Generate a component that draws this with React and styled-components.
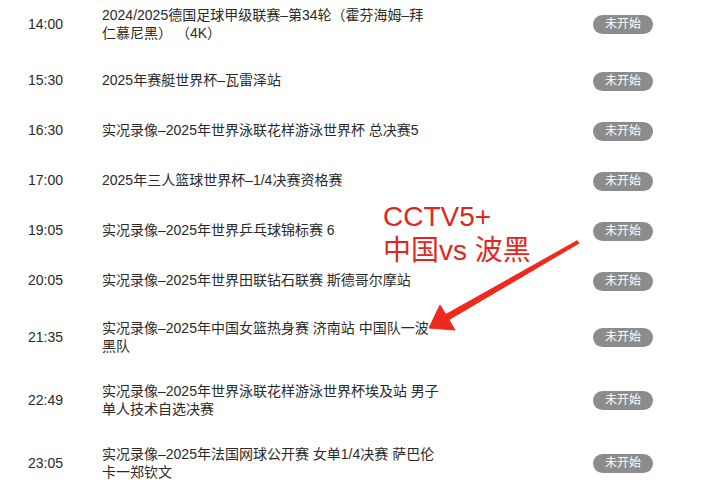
import React from "react";
import styled, { createGlobalStyle } from "styled-components";

const GlobalStyle = createGlobalStyle`
  html, body {
    margin: 0;
    padding: 0;
    background: #ffffff;
  }
  body {
    font-family: "Liberation Sans", "Noto Sans CJK SC", sans-serif;
    color: #222222;
    overflow: hidden;
  }
`;

const Styled = {
  Page: styled.div`
    position: relative;
    width: 711px;
    height: 500px;
    overflow: hidden;
    background: #ffffff;
  `,
  List: styled.div`
    display: flex;
    flex-direction: column;
    margin-top: -7px;
  `,
  Row: styled.div`
    display: flex;
    align-items: center;
    min-height: 50px;
    padding: 14px 0;
    box-sizing: border-box;
  `,
  Time: styled.div`
    width: 74px;
    padding-left: 28px;
    flex-shrink: 0;
    font-size: 14px;
    line-height: 17.5px;
    color: #2a2a2a;
  `,
  Title: styled.div`
    width: 345px;
    display: flex;
    flex-direction: column;
    font-size: 14px;
    line-height: 17.5px;
    color: #2a2a2a;
  `,
  Line: styled.span`
    white-space: pre;
  `,
  Badge: styled.div`
    margin-left: auto;
    margin-right: 58px;
    width: 60px;
    height: 19px;
    border-radius: 10px;
    background: #8c8c8c;
    color: #ffffff;
    font-size: 12px;
    line-height: 19px;
    text-align: center;
    flex-shrink: 0;
  `,
  Note: styled.div`
    position: absolute;
    left: 383px;
    top: 200px;
    font-size: 28px;
    line-height: 34px;
    color: #e3261d;
    white-space: nowrap;
  `,
  Arrow: styled.svg`
    position: absolute;
    left: 0;
    top: 0;
    pointer-events: none;
  `,
};

const programs = [
  { time: "14:00", lines: ["2024/2025德国足球甲级联赛–第34轮（霍芬海姆–拜", "仁慕尼黑） （4K）"] },
  { time: "15:30", lines: ["2025年赛艇世界杯–瓦雷泽站"] },
  { time: "16:30", lines: ["实况录像–2025年世界泳联花样游泳世界杯 总决赛5"] },
  { time: "17:00", lines: ["2025年三人篮球世界杯–1/4决赛资格赛"] },
  { time: "19:05", lines: ["实况录像–2025年世界乒乓球锦标赛 6"] },
  { time: "20:05", lines: ["实况录像–2025年世界田联钻石联赛 斯德哥尔摩站"] },
  { time: "21:35", lines: ["实况录像–2025年中国女篮热身赛 济南站 中国队一波", "黑队"] },
  { time: "22:49", lines: ["实况录像–2025年世界泳联花样游泳世界杯埃及站 男子", "单人技术自选决赛"] },
  { time: "23:05", lines: ["实况录像–2025年法国网球公开赛 女单1/4决赛 萨巴伦", "卡一郑钦文"] },
];

const App = () => {
  return (
    <Styled.Page>
      <GlobalStyle />
      <Styled.List>
        {programs.map((p) => (
          <Styled.Row key={p.time}>
            <Styled.Time>{p.time}</Styled.Time>
            <Styled.Title>
              {p.lines.map((line) => (
                <Styled.Line key={line}>{line}</Styled.Line>
              ))}
            </Styled.Title>
            <Styled.Badge>未开始</Styled.Badge>
          </Styled.Row>
        ))}
      </Styled.List>

      <Styled.Note>
        CCTV5+
        <br />
        中国vs 波黑
      </Styled.Note>

      {/* hand drawn arrow pointing at the 21:35 row */}
      <Styled.Arrow width="711" height="500" viewBox="0 0 711 500">
        <polygon
          points="577.2,240.7 445.8,314.5 440,305 429,328 455,330 448.8,319.7 578.8,243.3"
          fill="#ee2a1f"
          stroke="#ee2a1f"
          strokeWidth="1"
          strokeLinejoin="round"
        />
      </Styled.Arrow>
    </Styled.Page>
  );
};

export default App;
